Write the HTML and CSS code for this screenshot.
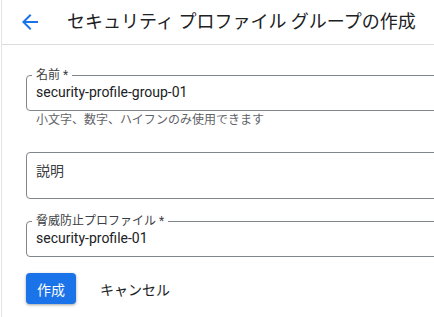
FILE: index.html
```html
<!DOCTYPE html>
<html lang="ja">
<head>
<meta charset="utf-8">
<link rel="stylesheet" href="styles.css">
</head>
<body>
<div class="page">
  <header class="header">
    <button class="back" aria-label="戻る">
      <svg width="24" height="24" viewBox="0 0 24 24"><path d="M20 11H7.83l5.59-5.59L12 4l-8 8 8 8 1.41-1.41L7.83 13H20v-2z" fill="#1a73e8"/></svg>
    </button>
    <h1 class="title">セキュリティ プロファイル グループの作成</h1>
  </header>
  <form class="form">
    <fieldset class="field">
      <legend class="label">名前 *</legend>
      <div class="value">security-profile-group-01</div>
    </fieldset>
    <div class="hint">小文字、数字、ハイフンのみ使用できます</div>

    <fieldset class="field field-area">
      <div class="placeholder">説明</div>
    </fieldset>

    <fieldset class="field field-third">
      <legend class="label">脅威防止プロファイル *</legend>
      <div class="value">security-profile-01</div>
    </fieldset>

    <div class="actions">
      <button type="button" class="btn-primary">作成</button>
      <button type="button" class="btn-text">キャンセル</button>
    </div>
  </form>
</div>
</body>
</html>
```
FILE: styles.css
```css
html, body {
  margin: 0;
  padding: 0;
  background: #fff;
  overflow: hidden;
}
body {
  font-family: Roboto, "Noto Sans CJK JP", sans-serif;
  color: #202124;
  width: 434px;
  height: 317px;
}
.page {
  margin-left: 1px;
  border-left: 1px solid #e3e3e3;
  height: 317px;
}
.header {
  display: flex;
  align-items: center;
  height: 43px;
  padding-bottom: 1px;
  border-bottom: 1px solid #dadce0;
}
.back {
  margin: 0 0 0 16px;
  padding: 0;
  border: 0;
  background: none;
  width: 24px;
  height: 24px;
  display: flex;
}
.title {
  margin: 0 0 0 25px;
  font-size: 18px;
  font-weight: 400;
  line-height: 24px;
  color: #202124;
  white-space: nowrap;
}
.form {
  padding: 23px 0 0 24px;
}
.field {
  margin: 0;
  padding: 0 9px 8px 9px;
  width: 440px;
  border: 1px solid #80868b;
  border-radius: 4px;
  min-width: 0;
}
.label {
  margin-left: -4px;
  padding: 0 4px;
  font-size: 12px;
  line-height: 14px;
  color: #3c4043;
}
.value {
  font-size: 14px;
  line-height: 20px;
  color: #202124;
}
.hint {
  margin: 1px 0 0 10px;
  font-size: 12px;
  line-height: 16px;
  color: #5f6368;
}
.field-area {
  margin-top: 24px;
  padding-top: 8px;
  padding-bottom: 17px;
}
.placeholder {
  font-size: 14px;
  line-height: 20px;
  color: #3c4043;
}
.field-third {
  margin-top: 15px;
}
.actions {
  display: flex;
  align-items: center;
  margin-top: 16px;
}
.btn-primary {
  height: 31px;
  padding: 0 11px;
  border: 0;
  border-radius: 4px;
  background: #1a73e8;
  color: #fff;
  font-family: Roboto, "Noto Sans CJK JP", sans-serif;
  font-size: 14px;
  box-shadow: 0 1px 2px rgba(60,64,67,0.3), 0 1px 3px 1px rgba(60,64,67,0.15);
}
.btn-text {
  margin-left: 12px;
  height: 31px;
  padding: 0 12px;
  border: 0;
  background: none;
  color: #202124;
  font-family: Roboto, "Noto Sans CJK JP", sans-serif;
  font-size: 14px;
}
```
